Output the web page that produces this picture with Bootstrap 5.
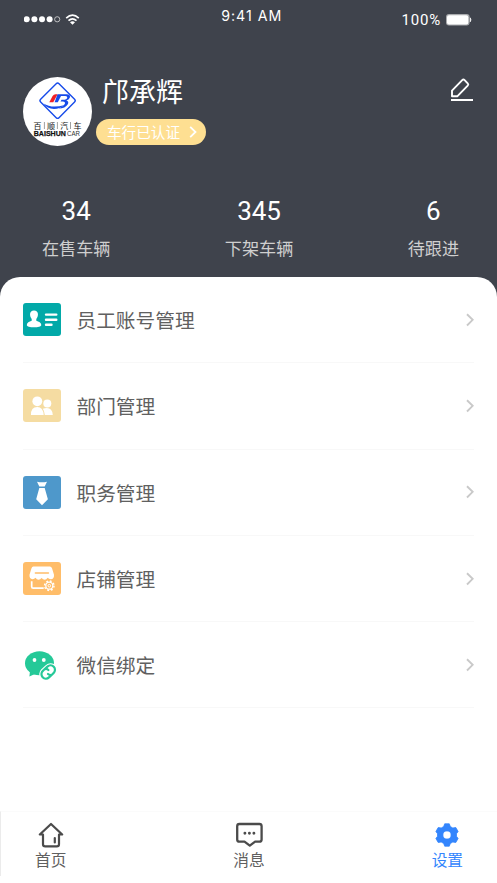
<!DOCTYPE html>
<html lang="zh-CN">
<head>
<meta charset="utf-8">
<meta name="viewport" content="width=device-width, initial-scale=1">
<title>设置</title>
<link href="https://cdn.jsdelivr.net/npm/bootstrap@5.3.0/dist/css/bootstrap.min.css" rel="stylesheet">
<style>
body{font-family:"Noto Sans CJK SC",sans-serif;background:#3f434c;height:883px;overflow:hidden;color:#606060}
svg{display:block;flex:none}
.status-row{height:40px;padding:0 24px;font-family:Roboto,"Noto Sans CJK SC",sans-serif;font-size:15px;line-height:20px}
.clock{padding-top:6px;padding-left:22px;letter-spacing:1px;font-family:Inter,sans-serif;font-size:14.2px}
.signal{padding-top:13px}
.power{padding-top:10px;letter-spacing:.8px}
.profile{height:160px;padding:37px 24px 0 23px}
.avatar{margin-right:4px}
.person{font-size:27px;line-height:30px;padding-left:6px;margin-top:-1px}
.verified{background:#fedf92;height:26px;width:110px;font-size:14.6px;line-height:26px;padding:0 9px 0 11px;margin-top:13px}
.stats{height:77px;padding:0 38px 0 42px}
.figure-num{font-family:Roboto,sans-serif;font-size:26px;line-height:30px;margin-top:-4px}
.figure-label{font-size:17.1px;line-height:24px;color:#cfcfcf;margin-top:10px}
.sheet{border-radius:20px 20px 0 0;height:534px;padding:0 23px}
.menu-row{height:86.3px;border-bottom:1px solid #f8f8f8}
.menu-name{font-size:19.7px;line-height:28px;margin-left:15.5px;padding-top:1px}
.tab-dock{height:72px}
.tabs{height:65px;padding:0 34px 0 34px;border-top:1px solid #fbfbfb;border-left:1px solid #ebebeb;font-size:15.7px;line-height:20px}
.tab-item{padding-top:9px;color:#606060;text-decoration:none}
.tab-item span{margin-top:1px}
.tab-item.chosen{color:#3385fd}
</style>
</head>
<body>
<header class="text-white">
  <div class="status-row d-flex justify-content-between">
    <div class="signal">
      <svg width="56" height="14" viewBox="0 0 56 14"><g fill="#fff"><circle cx="2.7" cy="6.3" r="3"/><circle cx="10.4" cy="6.3" r="3"/><circle cx="18" cy="6.3" r="3"/><circle cx="25.6" cy="6.3" r="3"/></g><circle cx="33.2" cy="6.3" r="2.6" fill="none" stroke="#ddd" stroke-width=".8"/><g fill="none" stroke="#fff" stroke-width="1.6"><path d="M42.2 5.2Q48.5-.8 54.8 5.2M44.5 7.6q4-3.6 8 0"/></g><path d="M46 9.2q2.5-1.8 5 0l-2.5 2.6z" fill="#fff"/></svg>
    </div>
    <div class="clock">9:41 AM</div>
    <div class="power d-flex">100%<svg class="ms-1" width="28" height="20" viewBox="0 0 28 20"><rect x="1" y="4.1" width="23.6" height="11.4" rx="3" fill="#a9abae"/><rect x="2" y="5.2" width="21.3" height="9.2" rx="2" fill="#fff"/><path d="M25.3 7.8q1.3 2 0 4z" fill="#fff" stroke="#fff" stroke-width=".7"/></svg></div>
  </div>
  <div class="profile d-flex align-items-start">
    <svg class="avatar" width="69" height="69" viewBox="0 0 69 69"><circle cx="34.5" cy="34.5" r="34.5" fill="#fff"/><rect x="21.6" y="10.7" width="26" height="26" rx="2" transform="rotate(45 34.6 23.7)" fill="none" stroke="#174bea" stroke-width="1.4"/><path d="m26.3 25.3 3.3-6.2q1-1.8 3-1.8h2l-4.3 8z" fill="#f01f25"/><path d="M34.5 17.2h9q4.4.4 3.3 3.5-.9 2.2-3.5 2.8 3 1 1.5 3.7-2.5 4.2-9 4.2 4.4-1.5 6-4.3.9-2.4-2-2.5h-2.3l1-1.9h3.2q2.3-.2 2.6-1.9.2-1.7-2-1.7H38l-3.2 6.2h-3.2z" fill="#174bea"/><path d="M20.5 26.5q8 5.2 20.5 1.7-4 3.7-10 3.7-7 0-10.5-5.4z" fill="#174bea"/><g font-family="Noto Sans CJK SC,sans-serif" font-size="8" fill="#111"><text x="10.5" y="51.5">百</text><text x="24" y="51.5">顺</text><text x="37.3" y="51.5">汽</text><text x="50.5" y="51.5">车</text></g><path d="M21.4 45v7M34.4 45v7M47.5 45v7" stroke="#777" stroke-width=".7"/><text x="10.8" y="59" font-family="Liberation Sans,sans-serif" font-size="7.3" font-weight="700" textLength="32" lengthAdjust="spacingAndGlyphs" fill="#111" stroke="#111" stroke-width=".25">BAISHUN</text><text x="44" y="59" font-family="Liberation Sans,sans-serif" font-size="7.3" textLength="13" lengthAdjust="spacingAndGlyphs" fill="#333">CAR</text></svg>
    <div class="flex-grow-1">
      <div class="person">邝承辉</div>
      <div class="verified rounded-pill d-flex align-items-center justify-content-between">车行已认证<svg width="8" height="12" viewBox="0 0 8 12"><path d="M1.2.8 6.5 6l-5.3 5.2" fill="none" stroke="#fff" stroke-width="1.8"/></svg></div>
    </div>
    <svg width="23" height="24" viewBox="0 0 23 24" fill="none" stroke="#fff"><path d="M2 19.2v-5.6L12.2 3.2q1.2-1.2 2.4 0l3.1 3.2q1.1 1.1 0 2.2L7.5 19.2z" stroke-width="1.9" stroke-linejoin="round"/><path d="M1 23h22" stroke-width="2"/></svg>
  </div>
  <div class="stats d-flex justify-content-between text-center">
    <div><div class="figure-num">34</div><div class="figure-label">在售车辆</div></div>
    <div><div class="figure-num">345</div><div class="figure-label">下架车辆</div></div>
    <div><div class="figure-num">6</div><div class="figure-label">待跟进</div></div>
  </div>
</header>
<main class="sheet bg-white">
  <div class="menu-row d-flex align-items-center">
    <svg width="38" height="33" viewBox="0 0 38 33"><rect width="38" height="33" rx="3" fill="#02a9a8"/><path d="M11 7.5c5 0 4.7 5.6 2.3 8.5v1.7c2.5.9 5 1.9 5 4.2 0 1.8-3.5 2.3-7.3 2.3s-7.2-.5-7.2-2.3c0-2.3 2.4-3.3 4.9-4.2V16C6.4 13.1 6 7.5 11 7.5z" fill="#fff"/><path d="M23 11.6h10.3M23 16.7h10.3M23 21.8h5.5" stroke="#fff" stroke-width="2.4" stroke-linecap="round"/></svg>
    <span class="menu-name">员工账号管理</span><svg class="ms-auto" width="8" height="14" viewBox="0 0 8 14"><path d="m1 1.2 5.7 5.6L1 12.5" fill="none" stroke="#c9c9c9" stroke-width="1.9"/></svg>
  </div>
  <div class="menu-row d-flex align-items-center">
    <svg width="38" height="33" viewBox="0 0 38 33"><rect width="38" height="33" rx="3" fill="#f5dca2"/><g fill="#fff"><circle cx="14.3" cy="12.3" r="4.9"/><path d="M8 26q-.3-7.8 6.3-8 5.8 0 6.4 8z"/><circle cx="24.3" cy="14.4" r="4"/><path d="M21.8 26q-.2-4-2-6.2 9.3-3 10 6.2z"/></g></svg>
    <span class="menu-name">部门管理</span><svg class="ms-auto" width="8" height="14" viewBox="0 0 8 14"><path d="m1 1.2 5.7 5.6L1 12.5" fill="none" stroke="#c9c9c9" stroke-width="1.9"/></svg>
  </div>
  <div class="menu-row d-flex align-items-center">
    <svg width="38" height="33" viewBox="0 0 38 33"><rect width="38" height="33" rx="3" fill="#4e98cb"/><path d="M14 5.8q5 1 10 0l-2.3 4.6h-5.4zM16.3 12h5.4l3.2 11.2L19 29.3l-5.8-6.1z" fill="#fff"/></svg>
    <span class="menu-name">职务管理</span><svg class="ms-auto" width="8" height="14" viewBox="0 0 8 14"><path d="m1 1.2 5.7 5.6L1 12.5" fill="none" stroke="#c9c9c9" stroke-width="1.9"/></svg>
  </div>
  <div class="menu-row d-flex align-items-center">
    <svg width="38" height="33" viewBox="0 0 38 33"><rect width="38" height="33" rx="3" fill="#ffbd69"/><path d="M10.4 4.6h16.4q1.6 0 2.2 1.6l2 6.5q.3 4.3-3.2 4.5-2 0-3.1-1.4-1.5 1.9-3 1.9-1.7 0-3.1-1.7-1.4 1.7-3.1 1.7-1.7 0-3-1.9-1.2 1.4-3 1.4-3.3-.3-3-4.5l2-6.5q.5-1.6 1.9-1.6z" fill="#fff"/><path d="M12.4 11h13" stroke="#ffbd69" stroke-width="1.6" stroke-linecap="round"/><path d="M8.7 19.2v5.5q0 1.5 1.5 1.5h10.5" fill="none" stroke="#fff" stroke-width="1.7"/><circle cx="26.3" cy="23.7" r="4.7" fill="none" stroke="#fff" stroke-width="1.5" stroke-dasharray="1.846 1.846"/><circle cx="26.3" cy="23.7" r="3.5" fill="none" stroke="#fff" stroke-width="1.3"/><circle cx="26.3" cy="23.7" r="1.3" fill="none" stroke="#fff"/></svg>
    <span class="menu-name">店铺管理</span><svg class="ms-auto" width="8" height="14" viewBox="0 0 8 14"><path d="m1 1.2 5.7 5.6L1 12.5" fill="none" stroke="#c9c9c9" stroke-width="1.9"/></svg>
  </div>
  <div class="menu-row d-flex align-items-center">
    <svg width="38" height="33" viewBox="0 0 38 33"><ellipse cx="16.5" cy="15.2" rx="14.5" ry="12" fill="#25c998"/><path d="m7 23-.6 5.600 6.600-3.100z" fill="#25c998"/><g fill="#fff"><circle cx="11.5" cy="12" r="1.9"/><circle cx="20.8" cy="12" r="1.9"/></g><g transform="translate(25.2 24) rotate(-43)" fill="none"><path d="M-3.2-4.4h6.4a4.4 4.4 0 0 1 0 8.8h-6.4a4.4 4.4 0 0 1 0-8.8z" fill="#fff" stroke="#fff" stroke-width="4.5"/><path d="M.5 4.5h-3.6a4.500 4.500 0 0 1 0-9h1.600q2.700.2 3 3.200M-.5-4.500h3.600a4.500 4.500 0 0 1 0 9H1.500q-2.700-.2-3-3.200" stroke="#25c998" stroke-width="2.2" stroke-linecap="round"/></g></svg>
    <span class="menu-name">微信绑定</span><svg class="ms-auto" width="8" height="14" viewBox="0 0 8 14"><path d="m1 1.2 5.7 5.6L1 12.5" fill="none" stroke="#c9c9c9" stroke-width="1.9"/></svg>
  </div>
</main>
<div class="tab-dock bg-white">
<nav class="tabs d-flex justify-content-between align-items-start">
  <a class="tab-item d-flex flex-column align-items-center" href="#"><svg width="28" height="28" viewBox="0 0 28 28" fill="none" stroke="#4b4b4b" stroke-width="2.2" stroke-linejoin="round" stroke-linecap="round"><path d="M6 13.5H2.8L14 3l11.2 10.5H22v9.7q0 2.2-2.2 2.2H8.2Q6 25.4 6 23.2z"/><path d="M17.8 17v4.5"/></svg><span>首页</span></a>
  <a class="tab-item d-flex flex-column align-items-center" href="#"><svg width="28" height="28" viewBox="0 0 28 28" fill="none" stroke="#4b4b4b" stroke-width="2.3" stroke-linejoin="round"><path d="M4.4 3h20q2.2 0 2.2 2.2v13.2q0 2.2-2.2 2.2h-4.3l-5.3 4-5.3-4H4.400q-2.200 0-2.200-2.200V5.200Q2.200 3 4.400 3z"/><path d="M9.900 12.300h.01M14.400 12.300h.01M18.900 12.300h.01" stroke-width="2.9" stroke-linecap="round"/></svg><span>消息</span></a>
  <a class="tab-item chosen d-flex flex-column align-items-center" href="#"><svg width="28" height="28" viewBox="0 0 28 28"><path fill="#3385fd" fill-rule="evenodd" d="M11.700 2.800h4.600l1 2.700 2.500 1.500 3-.5 2.300 4-1.600 2.200v2.600l1.600 2.200-2.300 4-3-.5-2.500 1.500-1 2.700h-4.600l-1-2.700L8.200 21l-3 .5-2.300-4 1.600-2.200v-2.600l-1.600-2.200 2.300-4 3 .5 2.500-1.500zM14 9.900a4.100 4.100 0 1 0 0 8.200 4.100 4.100 0 0 0 0-8.200z" stroke="#3385fd" stroke-width=".8" stroke-linejoin="round"/></svg><span>设置</span></a>
</nav>
</div>
<script src="https://cdn.jsdelivr.net/npm/bootstrap@5.3.0/dist/js/bootstrap.bundle.min.js"></script>
</body>
</html>
